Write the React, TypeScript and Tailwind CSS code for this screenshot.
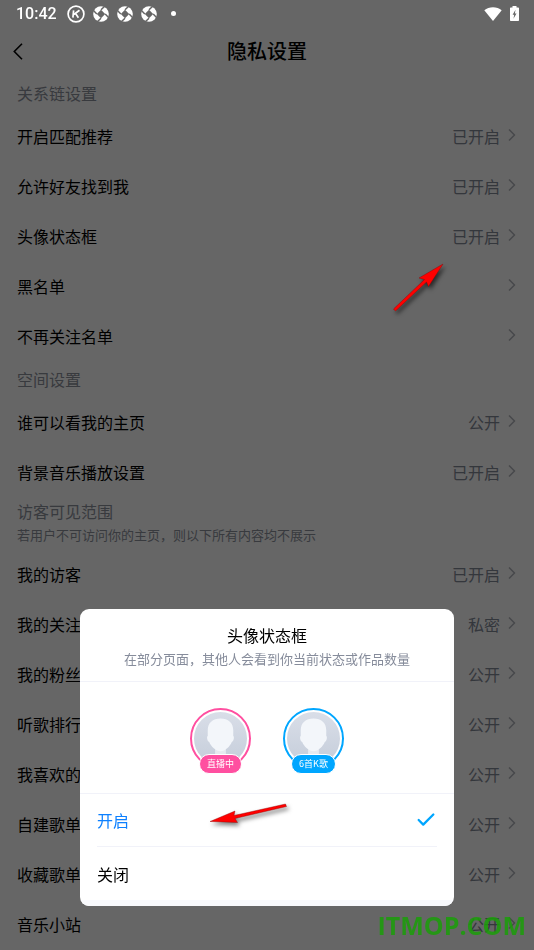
import { Check, ChevronRight } from 'lucide-react';

type Row = { label: string; value?: string };

const relationRows: Row[] = [
  { label: '开启匹配推荐', value: '已开启' },
  { label: '允许好友找到我', value: '已开启' },
  { label: '头像状态框', value: '已开启' },
  { label: '黑名单' },
  { label: '不再关注名单' },
];

const spaceRows: Row[] = [
  { label: '谁可以看我的主页', value: '公开' },
  { label: '背景音乐播放设置', value: '已开启' },
];

const visitorRows: Row[] = [
  { label: '我的访客', value: '已开启' },
  { label: '我的关注', value: '私密' },
  { label: '我的粉丝', value: '公开' },
  { label: '听歌排行', value: '公开' },
  { label: '我喜欢的', value: '公开' },
  { label: '自建歌单', value: '公开' },
  { label: '收藏歌单', value: '公开' },
  { label: '音乐小站', value: '公开' },
];

function RowList({ rows }: { rows: Row[] }) {
  return (
    <ul>
      {rows.map((row) => (
        <li key={row.label}>
          <button type="button" className="flex h-[50px] w-full items-center pl-[17px] pr-3 text-left">
            <span className="flex-1 text-black">{row.label}</span>
            <span className="text-[#828997]">{row.value}</span>
            <ChevronRight className="mb-0.5 ml-0.5 size-5 text-[#b4b7bd]" strokeWidth={2} />
          </button>
        </li>
      ))}
    </ul>
  );
}

function SectionTitle({ children }: { children: string }) {
  return <h2 className="px-[17px] py-2 leading-5 text-[#8c919c]">{children}</h2>;
}

// 状态栏里的旋转圆形图标
function ShutterIcon() {
  return (
    <svg className="size-4" viewBox="0 0 16 16">
      <circle cx="8" cy="8" r="7.8" fill="#fff" />
      <path d="M8 3.800 12.200 8 8 12.200 3.800 8z" fill="#666" />
      <path d="M8 3.800 12 0M12.200 8 16 12M8 12.200 4 16M3.800 8 0 4" stroke="#666" strokeWidth="1.5" />
    </svg>
  );
}

function StatusBar() {
  return (
    <div className="relative z-20 flex h-[27px] items-center pl-4 pr-[15px] text-white">
      <span className="font-[Roboto] text-base font-medium">10:42</span>
      <svg className="ml-2.5 size-[18px]" viewBox="0 0 18 18" fill="none" stroke="#fff">
        <circle cx="9" cy="9" r="7.900" strokeWidth="1.7" />
        <path d="M6.600 5.300 5.900 12.700M12.500 5.300 6.800 9.500M8.600 8.500l2.800 4.200" strokeWidth="1.7" />
      </svg>
      <div className="ml-2 flex gap-2">
        <ShutterIcon />
        <ShutterIcon />
        <ShutterIcon />
      </div>
      <span className="ml-3.5 size-[5px] rounded-full bg-white" />
      <div className="ml-auto flex items-center gap-2">
        <svg className="h-[14px] w-[18px]" viewBox="0 0 18 14" fill="#fff">
          <path d="M9 14 .3 3.2C5-.9 13-.9 17.700 3.2z" />
        </svg>
        <svg className="h-[15px] w-[9px]" viewBox="0 0 9 15">
          <path d="M2.500 0h4v1.500H8.200q.8 0 .8.800V14.200q0 .8-.8.800H.8Q0 15 0 14.200V2.300q0-.8.800-.8h1.700z" fill="#fff" />
          <path d="M5.500 3.800 2.600 8.700h1.600L3.500 12.700 6.500 7.600H4.900z" fill="#666" />
        </svg>
      </div>
    </div>
  );
}

function Avatar({ color, children }: { color: 'pink' | 'blue'; children: string }) {
  const ring = color === 'pink' ? 'border-[#ff4fa0]' : 'border-[#00a6ff]';
  const badge = color === 'pink' ? 'bg-[#ff4fa0]' : 'bg-[#00a6ff]';
  return (
    <div className="flex flex-col items-center">
      <div className={`size-[61px] rounded-full border-2 bg-white p-[2px] ${ring}`}>
        <svg className="size-full" viewBox="0 0 54 54">
          <defs>
            <linearGradient id={`bg-${color}`} x1="0" y1="0" x2="0" y2="1">
              <stop offset="0" stopColor="#d9dee8" />
              <stop offset="1" stopColor="#c5cdda" />
            </linearGradient>
            <clipPath id={`clip-${color}`}>
              <circle cx="27" cy="27" r="27" />
            </clipPath>
          </defs>
          <circle cx="27" cy="27" r="27" fill={`url(#bg-${color})`} />
          <g clipPath={`url(#clip-${color})`}>
            <path d="M21.500 36h11v7q0 3 8 5l6 6H8l6-6q7.500-2 7.500-5z" fill="#e6eaf0" />
            <path
              d="M27 6.500c8 0 13 4.500 13 12v6c1.200.5.800 5-1.500 6-1.800 4.500-7 9.500-11.500 9.500s-9.700-5-11.500-9.500c-2.300-1-2.700-5.500-1.500-6v-6c0-7.500 5-12 13-12z"
              fill="#f3f6fa"
            />
          </g>
        </svg>
      </div>
      <span className={`relative z-10 -mt-[15px] rounded-full border border-white px-[7px] text-[9px] leading-[18px] text-white ${badge}`}>
        {children}
      </span>
    </div>
  );
}

function StatusDialog() {
  return (
    <div className="fixed inset-0 z-10 flex items-end bg-black/60 px-20 pb-11">
      <div role="dialog" aria-labelledby="dialog-title" className="w-full overflow-hidden rounded-[9px] bg-white">
        <header className="border-b border-[#f1f2f9] pb-3 pt-4 text-center">
          <h2 id="dialog-title" className="leading-5 text-black">头像状态框</h2>
          <p className="mt-1 text-[13px] leading-5 text-[#868c9b]">在部分页面，其他人会看到你当前状态或作品数量</p>
        </header>
        <div className="flex justify-center gap-8 border-b border-[#f1f2f9] pb-[19px] pt-[26px]">
          <Avatar color="pink">直播中</Avatar>
          <Avatar color="blue">6首K歌</Avatar>
        </div>
        <div className="px-[17px]">
          <button type="button" className="flex h-[53px] w-full items-center justify-between border-b border-[#f1f2f9] text-[#0d80ff]">
            开启
            <Check className="size-[22px] text-[#00a6ff]" strokeWidth={2.5} />
          </button>
          <button type="button" className="flex h-[53px] w-full items-center text-black">
            关闭
          </button>
        </div>
        <div className="h-1.5 bg-[#f8f9fc]" />
      </div>
    </div>
  );
}

// 红色指示箭头
function Arrows() {
  return (
    <>
      <svg className="absolute left-[388px] top-[258px] z-20 h-[60px] w-[64px] drop-shadow-[2px_3px_2px_rgba(0,0,0,0.6)]" viewBox="388 258 64 60">
        <path d="M443 264 428.500 286.500 426.500 282 395.500 311 393.500 309 424.500 279.500 419 278z" fill="#f00" stroke="#800" strokeWidth=".4" />
      </svg>
      <svg className="absolute left-[205px] top-[798px] z-20 h-[34px] w-[90px] drop-shadow-[2px_3px_2px_rgba(0,0,0,0.5)]" viewBox="205 798 90 34">
        <path d="M210 821.500 235 811 234 815.500 285.500 804 286.500 806.500 235 818.500 237.500 822.500z" fill="#f00" stroke="#800" strokeWidth=".4" />
      </svg>
    </>
  );
}

export default function App() {
  return (
    <div className="relative min-h-screen overflow-hidden bg-white font-['Noto_Sans_CJK_SC',sans-serif] text-base">
      <StatusBar />
      <nav className="relative flex h-12 items-center justify-center">
        <button type="button" aria-label="返回" className="absolute left-3 p-px text-black">
          <svg className="h-[17px] w-2.5" viewBox="0 0 10 17" fill="none" stroke="currentColor" strokeWidth="1.6">
            <path d="M9 .8 1.300 8.500 9 16.200" />
          </svg>
        </button>
        <h1 className="text-xl font-medium text-black">隐私设置</h1>
      </nav>
      <main>
        <SectionTitle>关系链设置</SectionTitle>
        <RowList rows={relationRows} />
        <SectionTitle>空间设置</SectionTitle>
        <RowList rows={spaceRows} />
        <div className="px-[17px] py-1 text-[#8c919c]">
          <h2 className="leading-5">访客可见范围</h2>
          <p className="mt-1 text-[13px] leading-5">若用户不可访问你的主页，则以下所有内容均不展示</p>
        </div>
        <RowList rows={visitorRows} />
      </main>
      <StatusDialog />
      <Arrows />
      <div className="fixed bottom-2.5 right-2 z-20 font-['Open_Sans',sans-serif] text-[25px] font-bold leading-[30px] text-[#1a9f08]/85">
        ITMOP.COM
      </div>
    </div>
  );
}
